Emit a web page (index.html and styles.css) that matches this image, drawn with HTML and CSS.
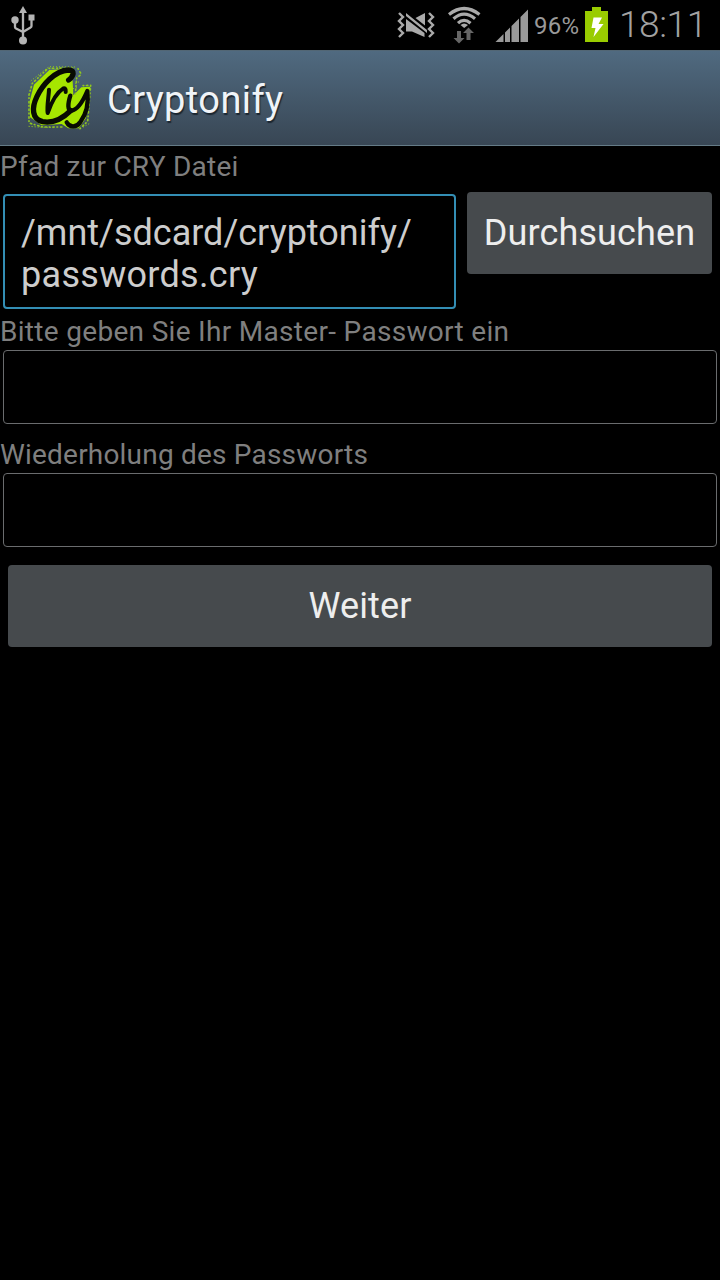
FILE: index.html
```html
<!DOCTYPE html>
<html lang="de">
<head>
<meta charset="utf-8">
<title>Cryptonify</title>
<link rel="stylesheet" href="styles.css">
</head>
<body>
<header class="status">
  <svg class="usb" width="28" height="40" viewBox="9 5 28 40" fill="none" stroke="#b4b4b4" stroke-width="2.300">
    <path d="M23 40V11M15 20V27Q15 28 16 28.500L23 32M31.500 17V26Q31.500 27 30.500 27.500L23 32"/>
    <path d="M23 6L27 13H19Z" fill="#b4b4b4" stroke="none"/>
    <circle cx="15" cy="20" r="3.700" fill="#b4b4b4" stroke="none"/>
    <circle cx="23" cy="40.500" r="4" fill="#b4b4b4" stroke="none"/>
    <path d="M28.500 14.500h6v6h-6z" fill="#b4b4b4" stroke="none"/>
  </svg>
  <svg class="signals" width="134" height="50" viewBox="396 0 134 50" fill="#aaa">
    <path d="M399 13L403 17L399 21L403 25L399 29L403 33L399 37M429 13L433 17L429 21L433 25L429 29L433 33L429 37" fill="none" stroke="#aaa" stroke-width="2.400"/>
    <path d="M406 19L424.500 33V37L412 31.500H406ZM406 13L427 30V33L406 16ZM415.500 18L425 13V25.500Z"/>
    <g fill="none" stroke="#aaa" stroke-width="3.200">
      <path d="M449 14.500Q464 2.500 479.500 14.500M453.500 18.800Q464 9.500 475 18.800M458 23.200Q464 17.500 470.500 23.200"/>
    </g>
    <path d="M460.500 25Q464 22 468 25L464.200 28Z"/>
    <path d="M457 31h4v7h3.500L459 43.500L453.500 38H457ZM466.500 40V33H463L468.500 27.500L474 33H470.500V40Z" fill="#666"/>
    <path d="M495.500 42L503.500 34V42ZM505 42V32.500L510 27.500V42ZM511.500 42V26L519 18.500V42ZM520.500 42V17L528 9.500V42Z" fill="#999"/>
  </svg>
  <span class="percent">96%</span>
  <svg class="battery" width="23" height="36" viewBox="585 7 23 36">
    <path d="M592 7h9v4h7v31h-23V11h7z" fill="#99cc00"/>
    <path d="M593.500 17.500H602L598.500 24H603.500L593.500 37L595.500 28H591.500Z" fill="#fff"/>
  </svg>
  <time class="clock">18:11</time>
</header>
<div class="bar">
  <svg class="logo" width="64" height="64" viewBox="24 24 192 192" fill="none" stroke-linecap="round" stroke-linejoin="round">
    <path d="M150 32L88 36L42 80L29 130L30 178L65 202L125 198L145 211H176L198 180L211 86L184 88L160 112L158 70Z" fill="#a6e600"/>
    <path d="M158 30L84 31L37 76L27 110V195L68 207L132 207M180 212L203 190L212 82L183 83M166 108L170 60L185 48M174 32L183 47" stroke="#91c81e" stroke-width="5" stroke-dasharray="2 9 4 8"/>
    <path d="M164 27L87 26L32 69M27 205L52 207L105 209M190 207L211 195M167 76L180 70M160 92L177 87" stroke="#91c81e" stroke-width="3" stroke-dasharray="1 8"/>
    <g stroke="#080b02">
      <path d="M146 66C160 55 168 36 145 36C105 38 68 80 51 115C34 150 36 184 68 191C103 197 133 177 152 158" stroke-width="16"/>
      <path d="M87 95C86 118 80 144 83 165C92 139 106 106 130 91C138 89 137 99 137 102" stroke-width="12"/>
      <path d="M151 113C143 138 142 158 155 158C173 155 190 127 202 99C206 132 199 168 181 192C170 209 149 210 140 193" stroke-width="13"/>
    </g>
  </svg>
  <h1 class="title">Cryptonify</h1>
</div>
<main class="form">
  <div class="label path-label"><span>Pfad zur CRY Datei</span></div>
  <div class="file-row">
    <div class="field focused">/mnt/sdcard/cryptonify/<br><span class="file-name">passwords.cry</span></div>
    <button class="button browse">Durchsuchen</button>
  </div>
  <div class="label prompt-label"><span>Bitte geben Sie Ihr Master- Passwort ein</span></div>
  <div class="field empty"></div>
  <div class="label repeat-label"><span>Wiederholung des Passworts</span></div>
  <div class="field empty"></div>
  <button class="button next">Weiter</button>
</main>
</body>
</html>
```
FILE: styles.css
```css
* { box-sizing: border-box; }
body {
  margin: 0;
  width: 720px;
  height: 1280px;
  background: #000;
  font-family: Roboto, sans-serif;
  overflow: hidden;
}
.status { display: flex; height: 50px; color: #999; }
.usb { margin: 5px 0 0 9px; }
.signals { margin-left: 359px; }
.percent {
  width: 51px;
  padding-left: 4px;
  font-size: 24px;
  line-height: 52px;
  letter-spacing: .3px;
  white-space: nowrap;
}
.battery { margin-top: 7px; margin-left: 4px; }
.clock {
  margin-left: 11px;
  color: #a2a2a2;
  font-size: 37px;
  font-weight: 300;
  line-height: 50px;
  letter-spacing: -.4px;
}
.bar {
  display: flex;
  height: 96px;
  padding: 16px 0 0 28px;
  background: linear-gradient(#506a80, #384654);
  border-bottom: 1px solid #657b87;
  border-top: 1px solid #526674;
}
.logo { margin-top: -1px; }
.title {
  margin: -1px 0 0 15px;
  color: #f0f4f8;
  font-size: 38px;
  font-weight: 400;
  line-height: 68px;
  letter-spacing: .4px;
  text-shadow: 1px 2px 1px #1b2630;
}
.form { display: flex; flex-direction: column; }
.label {
  font-size: 28px;
  color: #7f7f7f;
  white-space: nowrap;
  letter-spacing: .25px;
}
.path-label { height: 46px; line-height: 42px; }
.prompt-label { height: 41px; line-height: 45px; letter-spacing: .31px; }
.repeat-label { height: 49px; line-height: 61px; letter-spacing: .2px; }
.file-row { display: flex; height: 117px; padding: 0 8px 0 3px; gap: 11px; }
.field { border-radius: 4px; }
.focused {
  width: 453px;
  height: 115px;
  margin-top: 2px;
  padding: 16px 0 0 16px;
  border: 2px solid #338eb4;
  color: #cdcdcd;
  font-size: 36px;
  line-height: 42px;
  letter-spacing: 0;
}
.file-name { letter-spacing: .3px; }
.empty { height: 74px; margin: 0 3px; border: 1px solid #6a6c6e; }
.button {
  padding: 0;
  height: 82px;
  border: 0;
  border-radius: 4px;
  background: #464a4d;
  color: #eee;
  font: 36px/82px Roboto, sans-serif;
  letter-spacing: .15px;
}
.browse { width: 245px; }
.next { margin: 18px 8px 0; }
```
